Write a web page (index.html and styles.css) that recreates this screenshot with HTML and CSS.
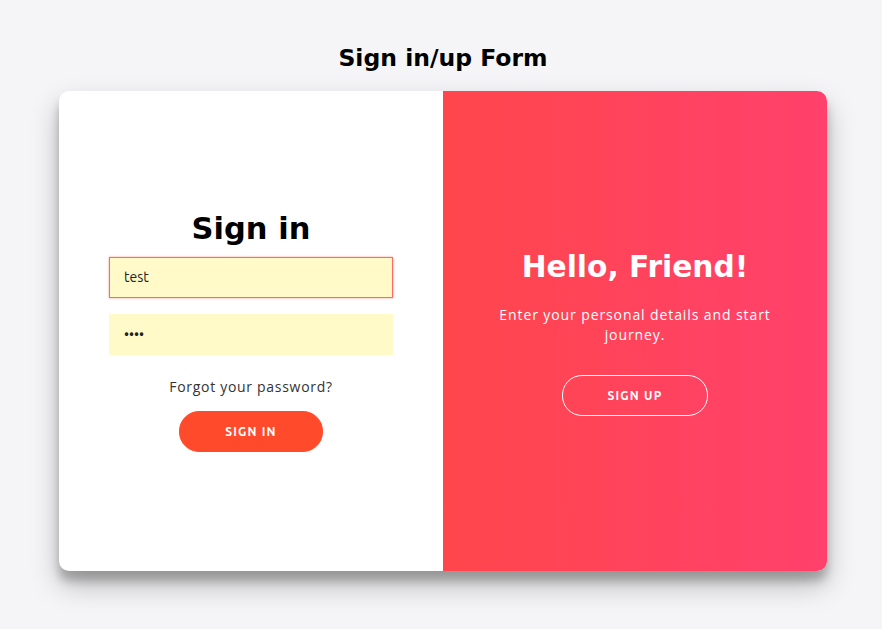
FILE: index.html
```html
<!DOCTYPE html>
<html>
<head>
<meta charset="utf-8">
<link rel="stylesheet" href="styles.css">
</head>
<body>
<h2 class="page-title">Sign in/up Form</h2>
<div class="card">
  <form class="sign-in" onsubmit="return false">
    <h1 class="title">Sign in</h1>
    <input class="field field-focus" type="text" value="test">
    <input class="field" type="password" value="test">
    <a class="forgot" href="#">Forgot your password?</a>
    <button class="btn">Sign In</button>
  </form>
  <div class="overlay">
    <h1 class="title title-light">Hello, Friend!</h1>
    <p class="lead">Enter your personal details and start journey.</p>
    <button class="btn btn-ghost">Sign Up</button>
  </div>
</div>
</body>
</html>
```
FILE: styles.css
```css
* { box-sizing: border-box; }
html, body { margin: 0; }
body {
  background: #f5f5f7;
  font-family: "Montserrat", "Noto Sans", sans-serif;
  display: flex;
  flex-direction: column;
  align-items: center;
  height: 629px;
  padding-top: 43px;
  padding-left: 4px;
}
.page-title {
  margin: 0 0 18px;
  font-family: "DejaVu Sans", sans-serif;
  font-weight: bold;
  font-size: 23.5px;
  line-height: 30px;
  color: #000;
}
.card {
  width: 768px;
  height: 480px;
  background: #fff;
  border-radius: 10px;
  box-shadow: 0 14px 28px rgba(0,0,0,0.25), 0 10px 10px rgba(0,0,0,0.22);
  display: flex;
  overflow: hidden;
}
.sign-in {
  width: 384px;
  padding: 0 50px 2px;
  display: flex;
  flex-direction: column;
  align-items: center;
  justify-content: center;
  text-align: center;
  margin: 0;
}
.title {
  margin: 0;
  font-family: "DejaVu Sans", sans-serif;
  font-weight: bold;
  font-size: 30.5px;
  line-height: 40px;
  color: #000;
}
.field {
  width: 100%;
  height: 41px;
  margin: 8px 0;
  padding: 12px 15px;
  border: none;
  background: #fffac8;
  font-family: "Ubuntu", "DejaVu Sans", sans-serif;
  font-size: 14px;
  color: #222;
  outline: none;
}
.field-focus {
  border: 1px solid #ff6b63;
  box-shadow: 0 0 2px rgba(255, 80, 70, 0.6);
  padding-left: 14px;
}
.forgot {
  margin: 15px 0;
  font-family: "Open Sans", sans-serif;
  font-size: 14px;
  letter-spacing: 0.7px;
  color: #333;
  text-decoration: none;
  line-height: 18px;
}
.btn {
  border-radius: 20px;
  border: 1px solid #ff4b2b;
  background: #ff4b2b;
  color: #fff;
  font-family: "Ubuntu", "DejaVu Sans", sans-serif;
  font-size: 12px;
  font-weight: bold;
  padding: 0 45px;
  height: 41px;
  letter-spacing: 1.2px;
  text-transform: uppercase;
}
.overlay {
  width: 384px;
  padding: 0 40px 2px;
  background: linear-gradient(to right, #ff464c, #ff416c);
  color: #fff;
  display: flex;
  flex-direction: column;
  align-items: center;
  justify-content: center;
  text-align: center;
}
.title-light { color: #fff; font-size: 29.7px; margin-top: 2px; margin-bottom: -2px; }
.lead {
  font-family: "Open Sans", sans-serif;
  font-size: 14px;
  font-weight: 400;
  line-height: 20px;
  letter-spacing: 0.9px;
  margin: 20px 0 30px;
}
.btn-ghost {
  background: transparent;
  border-color: #fff;
}
```
